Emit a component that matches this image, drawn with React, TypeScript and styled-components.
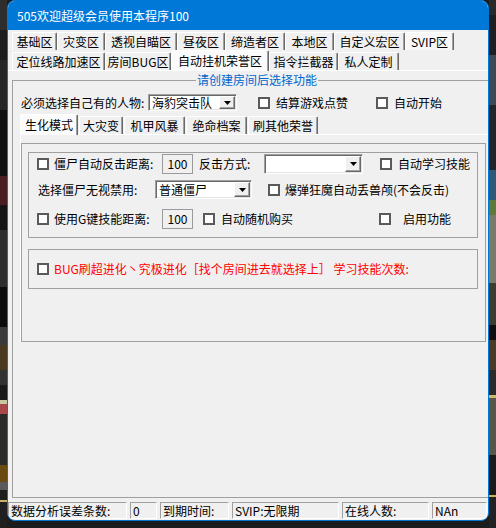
import React from 'react';
import styled, { createGlobalStyle } from 'styled-components';

const FONT = `"Noto Sans CJK SC", "Microsoft YaHei", "Liberation Sans", sans-serif`;

const Global = createGlobalStyle`
  html, body { margin: 0; padding: 0; }
  body { width: 496px; height: 528px; overflow: hidden; font-family: ${FONT}; font-size: 12px; color: #000; }
`;

const leftStrip = `linear-gradient(to bottom, #2e2e2e 0 30px, #1d1d1d 30px 60px, #262626 60px 110px, #101010 110px 176px, #4a1e22 176px 205px, #161616 205px 230px, #2e2e2e 230px 287px, #0c0c0c 287px 327px, #3a3a3a 327px 345px, #4b3a22 345px 370px, #333333 370px 385px, #1a1a1a 385px 400px, #c8c8a0 400px 404px, #a84848 404px 414px, #2a2a28 414px 465px, #6a4a10 465px 482px, #5a5a5a 482px 490px, #1e1e1e 490px 500px, #c8b070 500px 502px, #202020 502px 528px)`;

const rightStrip = `linear-gradient(to bottom, #2a2a2a 0 15px, #1e1f22 15px 55px, #3c4a58 55px 105px, #22262a 105px 170px, #2d5a78 170px 200px, #5d7a3a 200px 215px, #7a7a6c 215px 283px, #3c3c32 283px 325px, #0e0e0e 325px 340px, #4a3a2a 340px 370px, #2a2a2a 370px 395px, #c8b870 395px 398px, #56564a 398px 455px, #1a1a1a 455px 495px, #c8b060 495px 497px, #222222 497px 528px)`;

const Desktop = styled.div`
  width: 496px;
  height: 528px;
  box-sizing: border-box;
  padding-left: 7px;
  background: ${leftStrip} left top / 7px 100% no-repeat, ${rightStrip} right top / 7px 100% no-repeat, #1c1c1c;
`;

const Window = styled.div`
  width: 482px;
  height: 521px;
  box-sizing: border-box;
  border: 1px solid #0078d7;
  border-radius: 8px;
  overflow: hidden;
  background: #f0f0f0;
  display: flex;
  flex-direction: column;
`;

const TitleBar = styled.div`
  height: 29px;
  flex: none;
  background: #0078d7;
  color: #fff;
  display: flex;
  align-items: center;
  padding-left: 9px;
  font-size: 12px;
  line-height: 16px;
`;

const TabStrip = styled.div`
  flex: none;
  padding-left: 4px;
  padding-top: 2px;
`;

const TabRow = styled.div<{ $h: number }>`
  display: flex;
  align-items: flex-end;
  height: ${p => p.$h}px;
`;

const Tab = styled.div<{ $w: number; $active?: boolean; $hot?: boolean }>`
  width: ${p => p.$w}px;
  height: ${p => (p.$active ? 21 : 18)}px;
  margin-bottom: ${p => (p.$active ? -1 : 0)}px;
  box-sizing: border-box;
  display: flex;
  align-items: center;
  justify-content: center;
  background: ${p => (p.$active ? '#fbfbfb' : p.$hot ? '#f7f7f7' : '#f0f0f0')};
  border-top: 1px solid #fff;
  border-left: 1px solid #fff;
  border-right: 1px solid #696969;
  box-shadow: inset -1px 0 0 #a0a0a0;
  border-radius: 2px 2px 0 0;
  font-size: 12px;
  line-height: 16px;
  white-space: nowrap;
  position: relative;
  z-index: ${p => (p.$active ? 1 : 0)};
`;

const Panel = styled.div`
  flex: 1;
  border-top: 1px solid #fff;
  padding: 1px 0 0 4px;
  overflow: hidden;
`;

const Field = styled.fieldset`
  margin: 0;
  padding: 6px 0 0 8px;
  min-width: 0;
  width: 482px;
  height: 426px;
  box-sizing: border-box;
  border: 1px solid #a0a0a0;
`;

const Legend = styled.legend`
  margin: 0 auto;
  padding: 0 1px;
  color: #0066cc;
  font-size: 12px;
  line-height: 16px;
`;

const Row = styled.div<{ $cols: string; $h: number; $mt?: number; $pl?: number }>`
  display: grid;
  grid-template-columns: ${p => p.$cols};
  align-items: center;
  height: ${p => p.$h}px;
  margin-top: ${p => p.$mt ?? 0}px;
  padding-left: ${p => p.$pl ?? 0}px;
  font-size: 12px;
  line-height: 16px;
  white-space: nowrap;
`;

const Label = styled.span<{ $pl?: number }>`
  padding-left: ${p => p.$pl ?? 0}px;
`;

const CheckItem = styled.label<{ $gap?: number; $color?: string }>`
  display: flex;
  align-items: center;
  gap: ${p => p.$gap ?? 5}px;
  color: ${p => p.$color ?? '#000'};
`;

const Box = styled.span`
  width: 12px;
  height: 12px;
  box-sizing: border-box;
  border: 2px solid #5a5a5a;
  background: #fff;
  flex: none;
`;

const ComboBox = styled.div<{ $h: number }>`
  height: ${p => p.$h}px;
  box-sizing: border-box;
  background: #fff;
  border-top: 1px solid #a0a0a0;
  border-left: 1px solid #a0a0a0;
  border-right: 1px solid #fff;
  border-bottom: 1px solid #fff;
  box-shadow: inset 1px 1px 0 #696969, inset -1px -1px 0 #e3e3e3;
  padding: 1px;
  display: flex;
  align-items: stretch;
`;

const ComboText = styled.div`
  flex: 1;
  min-width: 0;
  padding-left: 2px;
  display: flex;
  align-items: center;
  line-height: 12px;
`;

const ComboButton = styled.div`
  width: 16px;
  flex: none;
  box-sizing: border-box;
  background: #f0f0f0;
  border-top: 1px solid #fff;
  border-left: 1px solid #fff;
  border-right: 1px solid #696969;
  border-bottom: 1px solid #696969;
  box-shadow: inset -1px -1px 0 #a0a0a0;
  display: flex;
  align-items: center;
  justify-content: center;
`;

const NumBox = styled.div`
  height: 20px;
  box-sizing: border-box;
  border: 1px solid #9a9a9a;
  background: #f0f0f0;
  display: flex;
  align-items: center;
  justify-content: center;
`;

const InnerStrip = styled.div`
  display: flex;
  align-items: flex-end;
  gap: 1px;
  height: 20px;
  margin-top: 3px;
  margin-left: -1px;
`;

const InnerPanel = styled.div`
  border-top: 1px solid #fff;
  border-left: 1px solid #fff;
  margin-left: -1px;
  padding-top: 8px;
`;

const Frame = styled.div`
  width: 465px;
  height: 199px;
  box-sizing: border-box;
  border: 1px solid #a0a0a0;
  padding: 8px 0 0 6px;
`;

const Group = styled.div<{ $mt: number; $h: number; $center?: boolean }>`
  width: 450px;
  height: ${p => p.$h}px;
  margin-top: ${p => p.$mt}px;
  box-sizing: border-box;
  border: 1px solid #a0a0a0;
  display: flex;
  flex-direction: column;
  justify-content: ${p => (p.$center ? 'center' : 'flex-start')};
`;

const StatusBar = styled.div`
  flex: none;
  height: 20px;
  box-sizing: border-box;
  padding-top: 2px;
  padding-bottom: 1px;
  display: grid;
  grid-template-columns: 119px 27px 69px 107px 87px 55px;
  column-gap: 3px;
`;

const StatusCell = styled.div`
  box-sizing: border-box;
  border-top: 1px solid #a0a0a0;
  border-left: 1px solid #a0a0a0;
  border-right: 1px solid #fff;
  border-bottom: 1px solid #fff;
  padding-left: 2px;
  font-size: 12px;
  line-height: 15px;
  white-space: nowrap;
  overflow: hidden;
`;

const Arrow = () => (
  <svg width="7" height="4" viewBox="0 0 7 4">
    <polygon points="0,0 7,0 3.5,4" fill="#000" />
  </svg>
);

const Combo = ({ h, text }: { h: number; text?: string }) => (
  <ComboBox $h={h}>
    <ComboText>{text}</ComboText>
    <ComboButton>
      <Arrow />
    </ComboButton>
  </ComboBox>
);

const Check = ({ children, gap, color }: { children: React.ReactNode; gap?: number; color?: string }) => (
  <CheckItem $gap={gap} $color={color}>
    <Box />
    <span>{children}</span>
  </CheckItem>
);

const row1Tabs: [string, number][] = [
  ['基础区', 45], ['灾变区', 48], ['透视自瞄区', 72], ['昼夜区', 48],
  ['缔造者区', 60], ['本地区', 49], ['自定义宏区', 71], ['SVIP区', 49],
];
const row2Tabs: [string, number][] = [
  ['定位线路加速区', 93], ['房间BUG区', 66], ['自动挂机荣誉区', 98], ['指令拦截器', 69], ['私人定制', 61],
];
const innerTabs: [string, number][] = [
  ['生化模式', 58], ['大灾变', 44], ['机甲风暴', 61], ['绝命档案', 61], ['刷其他荣誉', 70],
];

export default function App() {
  return (
    <>
      <Global />
      <Desktop>
        <Window>
          <TitleBar>505欢迎超级会员使用本程序100</TitleBar>
          <TabStrip>
            <TabRow $h={18}>
              {row1Tabs.map(([t, w]) => (
                <Tab key={t} $w={w} $hot={t === 'SVIP区'}>{t}</Tab>
              ))}
            </TabRow>
            <TabRow $h={20}>
              {row2Tabs.map(([t, w]) => (
                <Tab key={t} $w={w} $active={t === '自动挂机荣誉区'}>{t}</Tab>
              ))}
            </TabRow>
          </TabStrip>
          <Panel>
            <Field>
              <Legend>请创建房间后选择功能</Legend>
              <Row $cols="127px 89px 21px 118px auto" $h={17}>
                <Label>必须选择自己有的人物:</Label>
                <Combo h={17} text="海豹突击队" />
                <span />
                <Check gap={6}>结算游戏点赞</Check>
                <Check gap={6}>自动开始</Check>
              </Row>
              <InnerStrip>
                {innerTabs.map(([t, w]) => (
                  <Tab key={t} $w={w} $active={t === '生化模式'}>{t}</Tab>
                ))}
              </InnerStrip>
              <InnerPanel>
                <Frame>
                  <Group $mt={0} $h={86}>
                    <Row $cols="125px 31px 71px 99px 17px auto" $h={20} $mt={1} $pl={8}>
                      <Check>僵尸自动反击距离:</Check>
                      <NumBox>100</NumBox>
                      <Label $pl={6}>反击方式:</Label>
                      <Combo h={20} />
                      <span />
                      <Check gap={6}>自动学习技能</Check>
                    </Row>
                    <Row $cols="118px 97px 16px auto" $h={19} $mt={6} $pl={8}>
                      <Label $pl={1}>选择僵尸无视禁用:</Label>
                      <Combo h={19} text="普通僵尸" />
                      <span />
                      <Check>爆弹狂魔自动丢兽颅(不会反击)</Check>
                    </Row>
                    <Row $cols="125px 31px 10px 176px auto" $h={20} $mt={10} $pl={8}>
                      <Check>使用G键技能距离:</Check>
                      <NumBox>100</NumBox>
                      <span />
                      <Check gap={6}>自动随机购买</Check>
                      <Check gap={12}>启用功能</Check>
                    </Row>
                  </Group>
                  <Group $mt={11} $h={40} $center>
                    <Row $cols="auto" $h={20} $pl={8}>
                      <Check color="#ff0000">BUG刷超进化丶究极进化［找个房间进去就选择上］ 学习技能次数:</Check>
                    </Row>
                  </Group>
                </Frame>
              </InnerPanel>
            </Field>
          </Panel>
          <StatusBar>
            <StatusCell>数据分析误差条数:</StatusCell>
            <StatusCell>0</StatusCell>
            <StatusCell>到期时间:</StatusCell>
            <StatusCell>SVIP:无限期</StatusCell>
            <StatusCell>在线人数:</StatusCell>
            <StatusCell>NAn</StatusCell>
          </StatusBar>
        </Window>
      </Desktop>
    </>
  );
}
